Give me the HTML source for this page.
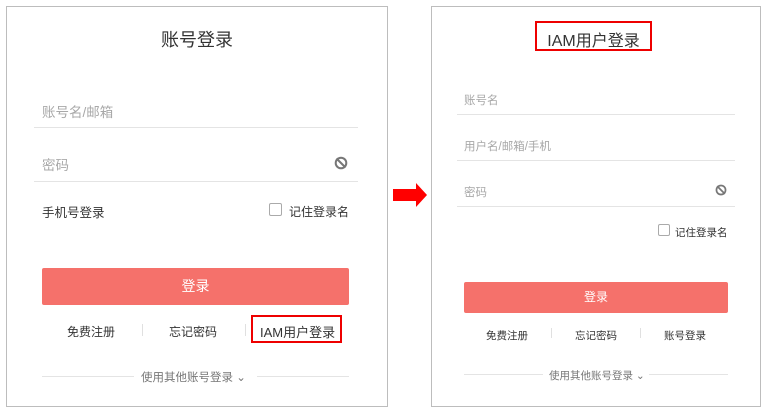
<!DOCTYPE html><html><head><meta charset="utf-8"><style>
body{margin:0;width:767px;height:415px;background:#fff;position:relative;font-family:"Liberation Sans","Noto Sans CJK SC",sans-serif;overflow:hidden}
.a{position:absolute;white-space:nowrap}
.p{position:absolute;border:1px solid #bdbdbd;box-sizing:border-box}
.l{position:absolute;height:1px;background:#e4e4e4}
.ph{color:#a8a8a8}
.btn{position:absolute;background:#f5716b;border-radius:2px;color:#fff;text-align:center}
.sep{position:absolute;width:1px;height:12px;background:#e0e0e0}
.cb{position:absolute;border:1px solid #aaa;border-radius:2px;box-sizing:border-box;background:#fff}
</style></head><body>
<div class="p" style="left:6px;top:6px;width:382px;height:401px"></div>
<div class="a" style="left:0;width:394px;text-align:center;top:26px;font-size:18px;color:#333">账号登录</div>
<div class="a ph" style="left:42px;top:101px;font-size:13.5px">账号名/邮箱</div>
<div class="l" style="left:34px;width:324px;top:127px"></div>
<div class="a ph" style="left:42px;top:154px;font-size:13.5px">密码</div>
<svg class="a" style="left:334px;top:156px" width="14" height="14" viewBox="0 0 14 14"><circle cx="7" cy="7" r="5.3" fill="none" stroke="#777" stroke-width="2"/><line x1="2.5" y1="2.5" x2="11.5" y2="11.5" stroke="#777" stroke-width="2"/></svg>
<div class="l" style="left:34px;width:324px;top:181px"></div>
<div class="a" style="left:42px;top:202px;font-size:12.5px;color:#333">手机号登录</div>
<div class="cb" style="left:269px;top:203px;width:13px;height:13px"></div>
<div class="a" style="left:289px;top:203px;font-size:12px;color:#333">记住登录名</div>
<div class="btn" style="left:42px;top:268px;width:307px;height:37px;line-height:37px;font-size:14px">登录</div>
<div class="a" style="left:67px;top:323px;font-size:12px;color:#333">免费注册</div>
<div class="sep" style="left:142px;top:324px"></div>
<div class="a" style="left:169px;top:323px;font-size:12px;color:#333">忘记密码</div>
<div class="sep" style="left:245px;top:324px"></div>
<div class="a" style="left:251px;top:315px;width:91px;height:28px;border:2px solid #e00;box-sizing:border-box"></div>
<div class="a" style="left:260px;top:322px;font-size:13px;color:#333">IAM用户登录</div>
<div class="l" style="left:42px;width:92px;top:376px"></div>
<div class="l" style="left:257px;width:92px;top:376px"></div>
<div class="a" style="left:141px;top:369px;font-size:11.5px;color:#777">使用其他账号登录 ⌄</div>

<svg class="a" style="left:392px;top:182px" width="36" height="26"><polygon points="1,7 24,7 24,1 35,13 24,25 24,19 1,19" fill="#f00"/></svg>

<div class="p" style="left:431px;top:6px;width:330px;height:401px"></div>
<div class="a" style="left:535px;top:21px;width:117px;height:30px;border:2px solid #e00;box-sizing:border-box"></div>
<div class="a" style="left:535px;width:117px;text-align:center;top:27px;font-size:16px;color:#333">IAM用户登录</div>
<div class="a ph" style="left:464px;top:92px;font-size:11.5px">账号名</div>
<div class="l" style="left:457px;width:278px;top:114px"></div>
<div class="a ph" style="left:464px;top:138px;font-size:11.5px">用户名/邮箱/手机</div>
<div class="l" style="left:457px;width:278px;top:160px"></div>
<div class="a ph" style="left:464px;top:184px;font-size:11.5px">密码</div>
<svg class="a" style="left:715px;top:184px" width="12" height="12" viewBox="0 0 14 14"><circle cx="7" cy="7" r="5.3" fill="none" stroke="#777" stroke-width="2"/><line x1="2.5" y1="2.5" x2="11.5" y2="11.5" stroke="#777" stroke-width="2"/></svg>
<div class="l" style="left:457px;width:278px;top:206px"></div>
<div class="cb" style="left:658px;top:224px;width:12px;height:12px"></div>
<div class="a" style="left:675px;top:225px;font-size:10.5px;color:#333">记住登录名</div>
<div class="btn" style="left:464px;top:282px;width:264px;height:31px;line-height:31px;font-size:12px">登录</div>
<div class="a" style="left:486px;top:328px;font-size:10.5px;color:#333">免费注册</div>
<div class="sep" style="left:551px;top:328px;height:10px"></div>
<div class="a" style="left:575px;top:328px;font-size:10.5px;color:#333">忘记密码</div>
<div class="sep" style="left:640px;top:328px;height:10px"></div>
<div class="a" style="left:664px;top:328px;font-size:10.5px;color:#333">账号登录</div>
<div class="l" style="left:464px;width:79px;top:374px"></div>
<div class="l" style="left:649px;width:79px;top:374px"></div>
<div class="a" style="left:549px;top:368px;font-size:10.5px;color:#777">使用其他账号登录 ⌄</div>
</body></html>
